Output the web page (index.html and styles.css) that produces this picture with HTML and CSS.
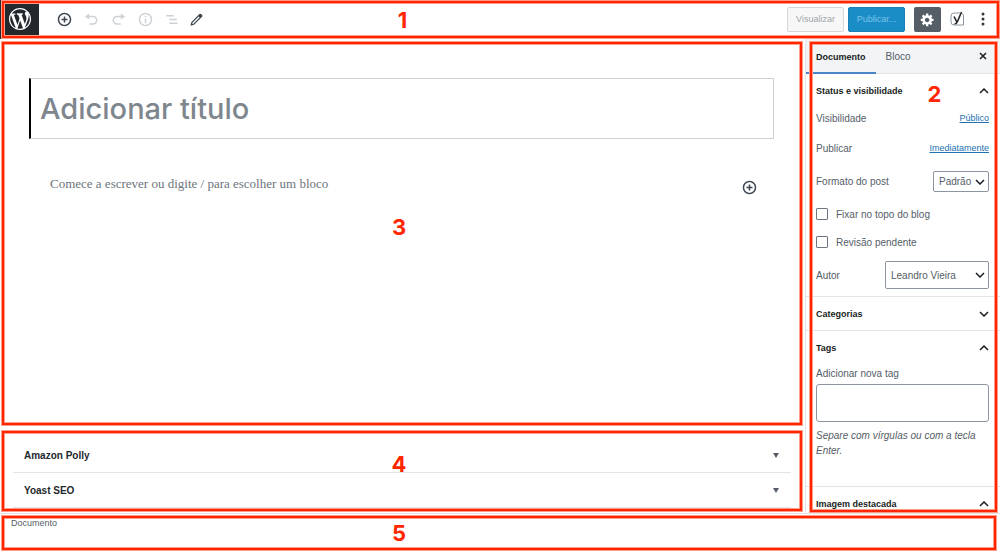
FILE: index.html
```
<!DOCTYPE html>
<html lang="pt-BR">
<head>
  <meta charset="UTF-8" />
  <meta name="viewport" content="width=device-width, initial-scale=1.0" />
  <title>Adicionar novo post</title>
  <link rel="stylesheet" href="styles.css">
</head>
<body>
  <div class="app">
    <header class="topbar">
      <a class="logo" href="#" aria-label="Ver posts">
        <svg width="22" height="22" viewBox="0 0 20 20" fill="#fff"><path d="M20 10c0-5.51-4.49-10-10-10C4.48 0 0 4.49 0 10c0 5.52 4.48 10 10 10 5.51 0 10-4.48 10-10zM7.78 15.37L4.37 6.22c.55-.02 1.17-.08 1.17-.08.5-.06.44-1.13-.06-1.11 0 0-1.45.11-2.37.11-.18 0-.37 0-.58-.01C4.12 2.69 6.87 1.11 10 1.11c2.33 0 4.45.87 6.05 2.34-.68-.11-1.65.39-1.65 1.58 0 .74.45 1.36.9 2.1.35.61.55 1.36.55 2.46 0 1.49-1.4 5-1.4 5l-3.03-8.37c.54-.02.82-.17.82-.17.5-.05.44-1.25-.06-1.22 0 0-1.44.12-2.38.12-.87 0-2.33-.12-2.33-.12-.5-.03-.56 1.2-.06 1.22l.92.08 1.26 3.41zM17.41 10c.24-.64.74-1.87.43-4.25.7 1.29 1.05 2.71 1.05 4.25 0 3.29-1.73 6.24-4.4 7.78.97-2.59 1.94-5.2 2.92-7.78zM6.1 18.09C3.12 16.65 1.11 13.53 1.11 10c0-1.3.23-2.48.72-3.59C3.25 10.3 4.67 14.2 6.1 18.09zm4.03-6.63l2.58 6.98c-.86.29-1.76.45-2.71.45-.79 0-1.57-.11-2.29-.33.81-2.38 1.62-4.74 2.42-7.1z"/></svg>
      </a>
      <div class="tools">
        <button class="tool" type="button" aria-label="Adicionar bloco">
          <svg width="15" height="15" viewBox="0 0 20 20"><path d="M10 1c-5 0-9 4-9 9s4 9 9 9 9-4 9-9-4-9-9-9zm0 16c-3.900 0-7-3.100-7-7s3.100-7 7-7 7 3.100 7 7-3.100 7-7 7zm1-11H9v3H6v2h3v3h2v-3h3V9h-3V6z"/></svg>
        </button>
        <button class="tool" type="button" aria-label="Desfazer" disabled>
          <svg width="15" height="15" viewBox="0 0 20 20"><path d="M12 5H7V2L1 6l6 4V7h5c2.200 0 4 1.800 4 4s-1.800 4-4 4H7v2h5c3.300 0 6-2.700 6-6s-2.700-6-6-6z"/></svg>
        </button>
        <button class="tool" type="button" aria-label="Refazer" disabled>
          <svg width="15" height="15" viewBox="0 0 20 20"><path d="M8 5h5V2l6 4-6 4V7H8c-2.200 0-4 1.800-4 4s1.800 4 4 4h5v2H8c-3.300 0-6-2.700-6-6s2.700-6 6-6z"/></svg>
        </button>
        <button class="tool" type="button" aria-label="Estrutura do conteúdo" disabled>
          <svg width="15" height="15" viewBox="0 0 20 20"><path d="M10 1c-5 0-9 4-9 9s4 9 9 9 9-4 9-9-4-9-9-9zm0 16c-3.900 0-7-3.100-7-7s3.100-7 7-7 7 3.100 7 7-3.100 7-7 7zM9 5h2v2H9zM9 9h2v6H9z"/></svg>
        </button>
        <button class="tool narrow" type="button" aria-label="Navegação de blocos" disabled>
          <svg width="15" height="15" viewBox="0 0 20 20"><path d="M3 4h10v2H3zM7 9h10v2H7zM7 14h11v2H7z"/></svg>
        </button>
        <button class="tool narrow" type="button" aria-label="Editar">
          <svg width="15" height="15" viewBox="0 0 20 20"><path fill-rule="evenodd" d="M3 13.500L13.500 3c1-1 2-1 3 0l.7.700c1 1 1 2 0 3L6.700 17 2 18.200zM4.600 14.300l-.3 1.600 1.600-.3 8.200-8.300-1.300-1.300z"/></svg>
        </button>
      </div>
      <div class="actions">
        <button class="btn" type="button" disabled>Visualizar</button>
        <button class="btn btn-primary" type="button" disabled>Publicar...</button>
        <button class="settings" type="button" aria-label="Configurações">
          <svg width="15" height="15" viewBox="0 0 20 20" fill="#fff"><path fill-rule="evenodd" d="M18 12h-2.180c-.17.700-.44 1.350-.81 1.930l1.540 1.540-2.100 2.100-1.540-1.540c-.58.360-1.230.63-1.910.79V19H8v-2.180c-.68-.16-1.330-.43-1.910-.79l-1.540 1.540-2.120-2.120 1.540-1.540c-.36-.58-.63-1.230-.79-1.910H1V9.030h2.170c.16-.7.44-1.350.8-1.940L2.430 5.550l2.100-2.100 1.540 1.540c.58-.37 1.240-.64 1.930-.81V2h3v2.180c.68.160 1.330.43 1.910.79l1.540-1.540 2.120 2.120-1.540 1.540c.36.590.64 1.240.8 1.940H18V12zm-8.500 1.500c1.660 0 3-1.340 3-3s-1.340-3-3-3-3 1.340-3 3 1.340 3 3 3z"/></svg>
        </button>
        <button class="plugin" type="button" aria-label="Yoast SEO">
          <svg width="15" height="16" viewBox="0 0 15 16" fill="none"><path d="M10 2H4Q1 2 1 5v6q0 3 3 3h9.500V5Q13.500 3 12 2.500" stroke="#8d96a0"/><path d="M4 5.500l2.800 5.300M11.500 1L7.500 10.500Q6.500 13 4.500 13" stroke="#23282d" stroke-width="1.600"/></svg>
        </button>
        <button class="plugin" type="button" aria-label="Mais opções">
          <svg width="4" height="14" viewBox="0 0 4 14" fill="#32373c"><circle cx="2" cy="2" r="1.500"/><circle cx="2" cy="7" r="1.500"/><circle cx="2" cy="12" r="1.500"/></svg>
        </button>
      </div>
      <div class="callout callout-topbar"><span>1</span></div>
    </header>

    <div class="workspace">
      <main class="main">
        <section class="editor">
          <input class="post-title" type="text" aria-label="Título" placeholder="Adicionar título">
          <div class="block">
            <input class="block-text" type="text" aria-label="Bloco" placeholder="Comece a escrever ou digite / para escolher um bloco">
            <button class="inserter" type="button" aria-label="Adicionar bloco">
              <svg width="15" height="15" viewBox="0 0 20 20"><path d="M10 1c-5 0-9 4-9 9s4 9 9 9 9-4 9-9-4-9-9-9zm0 16c-3.900 0-7-3.100-7-7s3.100-7 7-7 7 3.100 7 7-3.100 7-7 7zm1-11H9v3H6v2h3v3h2v-3h3V9h-3V6z"/></svg>
            </button>
          </div>
          <div class="callout callout-editor"><span>3</span></div>
        </section>

        <section class="metaboxes">
          <button class="metabox" type="button">Amazon Polly <i class="arrow"></i></button>
          <button class="metabox" type="button">Yoast SEO <i class="arrow"></i></button>
          <div class="callout callout-metaboxes"><span>4</span></div>
        </section>
      </main>

      <aside class="sidebar">
        <div class="sidebar-content">
          <div class="tabs">
            <button class="tab active" type="button">Documento</button>
            <button class="tab" type="button">Bloco</button>
            <button class="close" type="button" aria-label="Fechar">
              <svg width="8" height="8" viewBox="0 0 8 8"><path d="M1 1l6 6M7 1L1 7"/></svg>
            </button>
          </div>

          <section class="panel panel-status">
            <button class="panel-title" type="button">Status e visibilidade
              <svg width="10" height="6" viewBox="0 0 10 6"><path d="M1 5l4-4 4 4"/></svg>
            </button>
            <div class="row"><span>Visibilidade</span><a href="#">Público</a></div>
            <div class="row"><span>Publicar</span><a href="#">Imediatamente</a></div>
            <div class="row row-format">
              <label for="format">Formato do post</label>
              <div class="select">
                <select id="format"><option>Padrão</option></select>
                <svg width="10" height="6" viewBox="0 0 10 6"><path d="M1 1l4 4 4-4"/></svg>
              </div>
            </div>
            <div class="check"><input type="checkbox" id="sticky"><label for="sticky">Fixar no topo do blog</label></div>
            <div class="check"><input type="checkbox" id="pending"><label for="pending">Revisão pendente</label></div>
            <div class="row">
              <label for="author">Autor</label>
              <div class="select select-author">
                <select id="author"><option>Leandro Vieira</option></select>
                <svg width="10" height="6" viewBox="0 0 10 6"><path d="M1 1l4 4 4-4"/></svg>
              </div>
            </div>
          </section>

          <section class="panel">
            <button class="panel-title" type="button">Categorias
              <svg width="10" height="6" viewBox="0 0 10 6"><path d="M1 1l4 4 4-4"/></svg>
            </button>
          </section>

          <section class="panel panel-tags">
            <button class="panel-title" type="button">Tags
              <svg width="10" height="6" viewBox="0 0 10 6"><path d="M1 5l4-4 4 4"/></svg>
            </button>
            <label class="tag-label" for="tag">Adicionar nova tag</label>
            <input class="tag-input" type="text" id="tag">
            <p class="help">Separe com vírgulas ou com a tecla Enter.</p>
          </section>

          <section class="panel">
            <button class="panel-title" type="button">Imagem destacada
              <svg width="10" height="6" viewBox="0 0 10 6"><path d="M1 5l4-4 4 4"/></svg>
            </button>
          </section>
        </div>
        <div class="callout callout-sidebar"><span>2</span></div>
      </aside>
    </div>

    <footer class="footer">
      Documento
      <div class="callout callout-footer"><span>5</span></div>
    </footer>
  </div>
</body>
</html>
```
FILE: styles.css
```
* {
  margin: 0;
  padding: 0;
  box-sizing: border-box;
}

body {
  font-family: "Liberation Sans", Arial, sans-serif;
  font-size: 10px;
  color: #555d66;
  background: #fff;
}

button,
input,
select {
  font: inherit;
  color: inherit;
  background: none;
  border: none;
  border-radius: 0;
}

button {
  display: flex;
  align-items: center;
  justify-content: center;
}

.app {
  display: flex;
  flex-direction: column;
  height: 100vh;
}

/* Top bar */
.topbar {
  position: relative;
  display: flex;
  align-items: center;
  height: 39px;
  padding-right: 4px;
  border-bottom: 1px solid #e2e4e7;
}

.logo {
  display: flex;
  align-items: center;
  justify-content: center;
  width: 39px;
  height: 39px;
  background: #23282d;
}

.tools {
  display: flex;
  flex: 1;
  padding-left: 12px;
}

.tool {
  width: 27px;
  height: 27px;
  fill: #3c4650;
}

.tool.narrow {
  width: 25px;
}

.tool:disabled {
  fill: #cfd2d5;
}

.actions {
  display: flex;
  align-items: center;
}

.btn {
  width: 57px;
  height: 25px;
  margin-right: 4px;
  border: 1px solid #d5d7d9;
  border-radius: 2px;
  background: #f7f7f7;
  color: #a0a5aa;
  font-size: 9px;
}

.btn-primary {
  margin-right: 9px;
  border-color: #1a80b6;
  background: #1a8cc6;
  color: #7cc4e8;
}

.settings {
  width: 27px;
  height: 25px;
  margin-right: 3px;
  border-radius: 2px;
  background: #555d66;
}

.plugin {
  width: 26px;
  height: 25px;
}

/* Editor */
.workspace {
  display: flex;
  flex: 1;
  min-height: 0;
}

.main {
  display: flex;
  flex: 1;
  flex-direction: column;
  min-width: 0;
}

.editor {
  position: relative;
  flex: 1;
  padding: 39px 31px 0 29px;
}

.post-title {
  display: block;
  width: 100%;
  height: 61px;
  padding: 0 9px;
  border: 1px solid #ccd0d4;
  border-left: 2px solid #000;
  font-family: Inter, sans-serif;
  font-size: 29px;
  font-weight: 500;
}

.post-title::placeholder {
  color: #7e868e;
}

.block {
  display: flex;
  align-items: flex-start;
  padding: 35px 17px 0 21px;
}

.block-text {
  flex: 1;
  height: 20px;
  font-family: "Liberation Serif", serif;
  font-size: 13px;
}

.block-text::placeholder {
  color: #6c747c;
}

.inserter {
  width: 16px;
  height: 26px;
  fill: #3c4650;
}

/* Metaboxes */
.metaboxes {
  position: relative;
  padding: 8px 14px 5px 13px;
}

.metabox {
  justify-content: space-between;
  width: 100%;
  height: 35px;
  padding: 0 12px 0 11px;
  border-bottom: 1px solid #e2e4e7;
  color: #23282d;
  font-weight: bold;
}

.arrow {
  border: 3px solid transparent;
  border-top: 5px solid #555d66;
  border-bottom: none;
}

/* Sidebar */
.sidebar {
  position: relative;
  width: 195px;
  border-left: 1px solid #e2e4e7;
}

.sidebar-content {
  height: 100%;
  overflow: hidden;
}

.tabs {
  display: flex;
  height: 35px;
  border-bottom: 1px solid #e2e4e7;
  background: #f3f4f5;
}

.tab {
  height: 35px;
  padding: 2px 10px 0;
  border-bottom: 2px solid transparent;
}

.tab.active {
  border-color: #4a86c5;
  color: #191e23;
  font-size: 9px;
  font-weight: bold;
}

.close {
  width: 34px;
  margin-left: auto;
}

.close svg,
.panel-title svg,
.select svg {
  fill: none;
  stroke: #191e23;
  stroke-width: 1.5;
}

.panel {
  display: flex;
  flex-direction: column;
  padding: 0 11px 0 10px;
  border-bottom: 1px solid #e2e4e7;
}

.panel-title {
  justify-content: space-between;
  width: 100%;
  height: 33px;
  color: #191e23;
  font-size: 9px;
  font-weight: bold;
}

.panel-status {
  gap: 10px;
  padding-bottom: 7px;
}

.panel-status .panel-title {
  margin-bottom: -9px;
}

.row {
  display: flex;
  align-items: center;
  justify-content: space-between;
  min-height: 20px;
}

.row-format {
  min-height: 27px;
}

.row a {
  color: #2271b1;
  font-size: 9px;
}

.select {
  position: relative;
  width: 56px;
  height: 21px;
}

.select-author {
  width: 104px;
  height: 28px;
}

.select select {
  width: 100%;
  height: 100%;
  padding: 0 5px;
  border: 1px solid #8d96a0;
  border-radius: 2px;
  appearance: none;
}

.select svg {
  position: absolute;
  top: 50%;
  right: 4px;
  margin-top: -3px;
  pointer-events: none;
}

.check {
  display: flex;
  align-items: center;
  gap: 8px;
  height: 18px;
}

.check input {
  width: 12px;
  height: 12px;
  border: 1px solid #6c7781;
  border-radius: 1px;
  appearance: none;
}

.panel-tags {
  padding-bottom: 28px;
}

.tag-label {
  line-height: 20px;
}

.tag-input {
  height: 38px;
  padding: 0 6px;
  border: 1px solid #8d96a0;
  border-radius: 3px;
}

.help {
  margin-top: 6px;
  font-style: italic;
  line-height: 15px;
}

/* Footer */
.footer {
  position: relative;
  height: 41px;
  padding: 4px 11px;
  border-top: 1px solid #e2e4e7;
  font-size: 9px;
}

/* Numbered outlines over each area */
.callout {
  position: absolute;
  display: flex;
  align-items: center;
  justify-content: center;
  border: 2px solid #ff2600;
  box-shadow: 0 0 0 1px #ff9c8a, inset 0 0 0 1px #ff9c8a;
  color: #ff2600;
  font-family: Inter, sans-serif;
  font-size: 22px;
  font-weight: 700;
  line-height: 24px;
  pointer-events: none;
}

.callout-topbar {
  inset: 1px 1px 0 2px;
  padding-right: 196px;
}

.callout-editor {
  inset: 3px 3px 5px 2px;
  padding: 0 6px 14px 0;
}

.callout-metaboxes {
  inset: 1px 3px 2px 2px;
  padding: 0 6px 14px 0;
}

.callout-sidebar {
  inset: 3px 3px 1px 4px;
  align-items: flex-start;
  padding: 38px 0 0 62px;
}

.callout-footer {
  inset: 2px 4px 4px 2px;
  padding-right: 200px;
}
```
